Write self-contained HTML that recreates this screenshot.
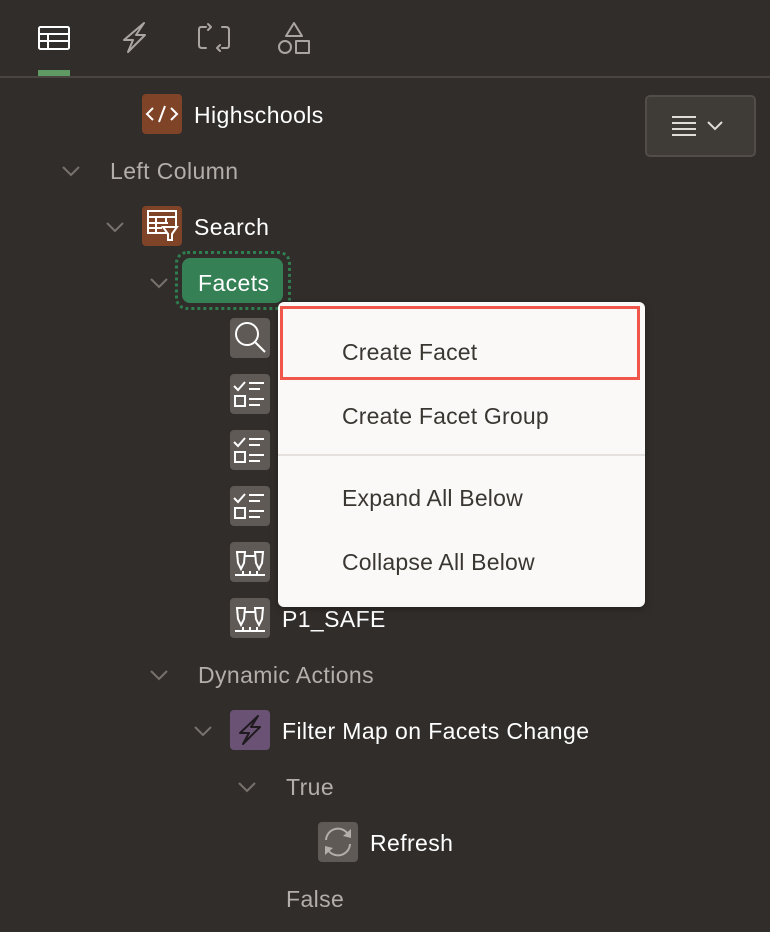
<!DOCTYPE html>
<html><head><meta charset="utf-8"><style>
*{margin:0;padding:0;box-sizing:border-box}
body{width:770px;height:932px;background:#312d2a;font-family:"Liberation Sans",sans-serif;position:relative;overflow:hidden}
.a{position:absolute}
.t{position:absolute;font-size:23px;letter-spacing:0.4px;line-height:30px;white-space:nowrap;color:#fff}
.g{color:#b3aea9}
.ic{position:absolute;width:40px;height:40px;border-radius:4px}
.mi{position:absolute;left:342px;font-size:23px;letter-spacing:0.2px;color:#3a3632;line-height:30px;white-space:nowrap}
</style></head><body>
<svg class="a" style="left:0;top:0" width="330" height="80">
<g fill="none" stroke="#fff" stroke-width="2"><rect x="39" y="27" width="30" height="22" rx="1.5"/><line x1="39" y1="34" x2="69" y2="34"/><line x1="39" y1="41" x2="69" y2="41"/><line x1="48" y1="34" x2="48" y2="49"/></g>
<g fill="none" stroke="#aaa5a0" stroke-width="2" stroke-linejoin="round" stroke-linecap="round">
<path d="M144 23 L124 40 L133 40 L128 52 L145 35 L136 35 Z"/>
<path d="M206 27 L201 27 Q199 27 199 30 L199 45 Q199 48 202 48 L206 48 M208 24 L211 27 L208 30"/>
<path d="M222 48 L227 48 Q229 48 229 45 L229 30 Q229 27 226 27 L222 27 M220 45 L217 48 L220 51"/>
<path d="M294 23 L302 36 L286 36 Z"/><circle cx="285" cy="47" r="6"/><rect x="296" y="41" width="13" height="12"/>
</g>
<rect x="38" y="70" width="32" height="6" fill="#5f9a64"/>
</svg>
<div class="a" style="left:0;top:76px;width:770px;height:2px;background:#4a4541"></div>
<div class="a" style="left:645px;top:95px;width:111px;height:62px;background:#3f3b37;border:2px solid #524d48;border-radius:5px"></div>
<svg class="a" style="left:670px;top:110px" width="60" height="40"><g stroke="#e0dcd8" stroke-width="2" fill="none"><line x1="2" y1="7" x2="26" y2="7"/><line x1="2" y1="13" x2="26" y2="13"/><line x1="2" y1="19" x2="26" y2="19"/><line x1="2" y1="25" x2="26" y2="25"/><path d="M38 12 L45 19 L52 12"/></g></svg>
<svg class="a" style="left:0;top:0" width="300" height="932"><g stroke="#78726d" stroke-width="2" fill="none">
<path d="M63 167 L71 175 L79 167"/><path d="M107 223 L115 231 L123 223"/><path d="M151 279 L159 287 L167 279"/>
<path d="M151 671 L159 679 L167 671"/><path d="M195 727 L203 735 L211 727"/><path d="M239 783 L247 791 L255 783"/>
</g></svg>
<div class="ic" style="left:142px;top:94px;background:#7f4428"></div>
<svg class="a" style="left:142px;top:94px" width="40" height="40"><g stroke="#fff" stroke-width="2" fill="none"><path d="M11 14 L5 20 L11 26 M29 14 L35 20 L29 26 M23 12 L17 28"/></g></svg>
<div class="t" style="left:194px;top:100px">Highschools</div>
<div class="t g" style="left:110px;top:156px">Left Column</div>
<div class="ic" style="left:142px;top:206px;background:#7f4428"></div>
<svg class="a" style="left:142px;top:206px" width="40" height="40"><g stroke="#fff" stroke-width="2" fill="none"><path d="M26 27 L6 27 L6 5 L34 5 L34 20 M6 11 L34 11 M6 17 L26 17 M6 22 L20 22 M14 11 L14 27 M24 11 L24 17"/><path d="M21 21 L35 21 L30 28 L30 34 L26 34 L26 28 Z"/></g></svg>
<div class="t" style="left:194px;top:212px">Search</div>
<div class="a" style="left:175px;top:251px;width:116px;height:59px;border:3px dotted #2f7f50;border-radius:12px"></div>
<div class="a" style="left:182px;top:258px;width:101px;height:45px;background:#358155;border-radius:8px"></div>
<div class="t" style="left:198px;top:268px">Facets</div>
<div class="ic" style="left:230px;top:318px;background:#5f5a55"></div>
<svg class="a" style="left:230px;top:318px" width="40" height="40"><g stroke="#fff" stroke-width="2" fill="none"><circle cx="17" cy="16" r="11"/><line x1="25" y1="24" x2="35" y2="34"/></g></svg>
<svg width="0" height="0"><defs><g id="cl" stroke="#fff" stroke-width="2" fill="none"><path d="M4 12 L8 16 L15 8 M19 9 L34 9 M19 15 L30 15 M19 25 L34 25 M19 31 L30 31"/><rect x="5" y="22" width="10" height="10"/></g><g id="dv" stroke="#fff" stroke-width="2" fill="none"><path d="M7 10 L15 10 L14 21 L11 27 L8 21 Z M25 10 L33 10 L32 21 L29 27 L26 21 Z M15 14 L25 14 M5 33 L35 33 M13 29 L13 33 M20 29 L20 33 M27 29 L27 33"/></g></defs></svg>
<div class="ic" style="left:230px;top:374px;background:#5f5a55"></div><svg class="a" style="left:230px;top:374px" width="40" height="40"><use href="#cl"/></svg>
<div class="ic" style="left:230px;top:430px;background:#5f5a55"></div><svg class="a" style="left:230px;top:430px" width="40" height="40"><use href="#cl"/></svg>
<div class="ic" style="left:230px;top:486px;background:#5f5a55"></div><svg class="a" style="left:230px;top:486px" width="40" height="40"><use href="#cl"/></svg>
<div class="ic" style="left:230px;top:542px;background:#5f5a55"></div><svg class="a" style="left:230px;top:542px" width="40" height="40"><use href="#dv"/></svg>
<div class="ic" style="left:230px;top:598px;background:#5f5a55"></div><svg class="a" style="left:230px;top:598px" width="40" height="40"><use href="#dv"/></svg>
<div class="t" style="left:282px;top:604px">P1_SAFE</div>
<div class="t g" style="left:198px;top:660px">Dynamic Actions</div>
<div class="ic" style="left:230px;top:710px;background:#6a5275"></div>
<svg class="a" style="left:230px;top:710px" width="40" height="40"><path d="M28 6 L10 23 L19 23 L13 34 L30 17 L21 17 Z" stroke="#1f1a1e" stroke-width="2" fill="none" stroke-linejoin="round"/></svg>
<div class="t" style="left:282px;top:716px">Filter Map on Facets Change</div>
<div class="t g" style="left:286px;top:772px">True</div>
<div class="ic" style="left:318px;top:822px;background:#5f5a55"></div>
<svg class="a" style="left:318px;top:822px" width="40" height="40"><g stroke="#b3aea9" stroke-width="2" fill="none"><path d="M8 18 A12 12 0 0 1 30 12 M32 22 A12 12 0 0 1 10 28"/></g><path d="M33 7 L33 16 L25 14 Z M7 33 L7 24 L15 26 Z" fill="#b3aea9"/></svg>
<div class="t" style="left:370px;top:828px">Refresh</div>
<div class="t g" style="left:286px;top:884px">False</div>
<div class="a" style="left:278px;top:302px;width:367px;height:305px;background:#fbf9f8;border-radius:6px;box-shadow:0 2px 8px rgba(0,0,0,.3)"></div>
<div class="a" style="left:280px;top:306px;width:360px;height:74px;border:3px solid #f0574a"></div>
<div class="a" style="left:278px;top:454px;width:367px;height:2px;background:#e3e0dd"></div>
<div class="mi" style="top:337px">Create Facet</div>
<div class="mi" style="top:401px">Create Facet Group</div>
<div class="mi" style="top:483px">Expand All Below</div>
<div class="mi" style="top:547px">Collapse All Below</div>
</body></html>
